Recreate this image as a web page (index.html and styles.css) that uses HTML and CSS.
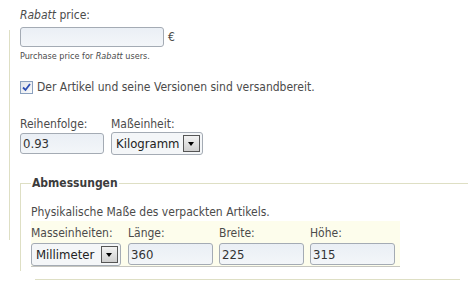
FILE: index.html
```html
<!DOCTYPE html>
<html lang="de">
  <head>
    <meta charset="UTF-8" />
    <meta name="viewport" content="width=device-width, initial-scale=1.0" />
    <title>Artikel – Versand</title>
    <link rel="stylesheet" href="styles.css">
  </head>
  <body>
    <div class="page">
      <div class="gutter"></div>
      <main class="form">
        <div class="field">
          <label class="label" for="price"><em>Rabatt</em> price:</label>
          <div class="price-row">
            <input id="price" class="text price" type="text" />
            <span class="currency">€</span>
          </div>
          <p class="help">Purchase price for <em>Rabatt</em> users.</p>
        </div>

        <label class="check">
          <span class="box">
            <svg width="9" height="9" viewBox="0 0 9 9">
              <path d="M1 4.5 L3.5 7 L8 1" fill="none" stroke="#2d4fb4" stroke-width="1.8" />
            </svg>
          </span>
          Der Artikel und seine Versionen sind versandbereit.
        </label>

        <div class="row">
          <div class="col">
            <label class="label" for="order">Reihenfolge:</label>
            <input id="order" class="text order" type="text" value="0.93" />
          </div>
          <div class="col">
            <span class="label">Maßeinheit:</span>
            <div class="select unit">
              <span>Kilogramm</span>
              <span class="arrow"></span>
            </div>
          </div>
        </div>

        <fieldset class="dims">
          <legend>Abmessungen</legend>
          <p class="desc">Physikalische Maße des verpackten Artikels.</p>
          <div class="dims-box">
            <div class="col">
              <span class="label">Masseinheiten:</span>
              <div class="select mm">
                <span>Millimeter</span>
                <span class="arrow"></span>
              </div>
            </div>
            <div class="col">
              <label class="label" for="len">Länge:</label>
              <input id="len" class="text dim" type="text" value="360" />
            </div>
            <div class="col">
              <label class="label" for="wid">Breite:</label>
              <input id="wid" class="text dim" type="text" value="225" />
            </div>
            <div class="col">
              <label class="label" for="hgt">Höhe:</label>
              <input id="hgt" class="text dim" type="text" value="315" />
            </div>
          </div>
        </fieldset>

        <hr class="sep" />
      </main>
    </div>
  </body>
</html>
```

FILE: styles.css
```css
*,
*::before,
*::after {
  box-sizing: border-box;
}

body {
  margin: 0;
  background: #fff;
  color: #4b4b4b;
  font-family: "DejaVu Sans Condensed", "DejaVu Sans", sans-serif;
  font-size: 12px;
}

.page {
  display: flex;
  width: 475px;
}

/* pale olive rule on the left of the form */
.gutter {
  width: 1px;
  height: 210px;
  margin: 30px 0 0 9px;
  background: #dedfc4;
}

.form {
  flex: 1;
  padding: 8px 0 0 10px;
}

.label {
  display: block;
  line-height: 14px;
  color: #4b4b4b;
}

.price-row {
  display: flex;
  align-items: center;
  gap: 4px;
  margin-top: 5px;
}

/* text inputs look like old XP themed boxes */
.text {
  height: 21px;
  margin: 0;
  padding: 1px 2px;
  border: 1px solid #a4abb4;
  border-radius: 3px;
  background: linear-gradient(#eaeff5, #f3f6f9);
  color: #333;
  font-family: "DejaVu Sans Condensed", "DejaVu Sans", sans-serif;
  font-size: 13px;
}

.price {
  width: 144px;
  height: 20px;
}

.help {
  margin: 3px 0 0;
  line-height: 12px;
  font-size: 9px;
}

.check {
  display: flex;
  align-items: center;
  gap: 4px;
  margin-top: 18px;
  line-height: 14px;
}

.box {
  display: flex;
  align-items: center;
  justify-content: center;
  width: 13px;
  height: 13px;
  border: 1px solid #8aa0be;
  background: linear-gradient(135deg, #dfe4ea, #fbfbfb);
}

.row {
  display: flex;
  gap: 7px;
  margin-top: 23px;
}

.order {
  width: 84px;
  margin-top: 2px;
}

.select {
  display: flex;
  align-items: center;
  justify-content: space-between;
  height: 23px;
  margin-top: 1px;
  padding: 0 2px 0 4px;
  border: 1px solid #a4abb4;
  border-radius: 3px;
  background: #f4f6f8;
  color: #222;
  font-size: 13px;
}

.unit {
  width: 92px;
}

.arrow {
  position: relative;
  width: 17px;
  height: 17px;
  border: 1px solid #555;
  background: linear-gradient(#f2f2f2, #cfcfcf);
}

/* small black triangle inside the dropdown button */
.arrow::after {
  content: "";
  position: absolute;
  left: 4px;
  top: 6px;
  border-left: 3.5px solid transparent;
  border-right: 3.5px solid transparent;
  border-top: 4px solid #000;
}

.dims {
  width: 448px;
  margin: 21px 0 0;
  padding: 0 0 4px 10px;
  border: 0;
  border-top: 1px solid #dedfc4;
  border-left: 1px solid #dedfc4;
}

.dims legend {
  padding: 0 1px;
  color: #3c3c3c;
  font-weight: bold;
  line-height: 14px;
}

.desc {
  margin: 15px 0 2px;
  line-height: 14px;
}

.dims-box {
  display: flex;
  gap: 6px;
  width: 369px;
  padding-top: 5px;
  background: #fdfdec;
  border-bottom: 1px solid #c6c6c0;
}

.dims-box .label {
  margin-bottom: 3px;
}

.mm {
  width: 90px;
  margin-right: 1px;
}

.dim {
  width: 85px;
  height: 22px;
}

.sep {
  width: 425px;
  margin: 8px 0 0 15px;
  border: 0;
  border-top: 1px solid #dedfc4;
}
```
